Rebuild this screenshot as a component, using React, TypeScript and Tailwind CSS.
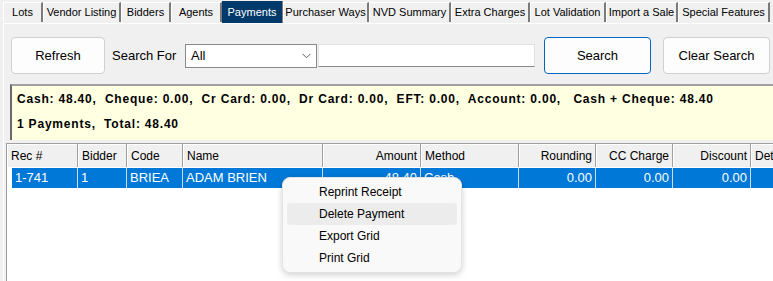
import React from "react";

const tabs: { label: string; w: number }[] = [
  { label: "Lots", w: 40 },
  { label: "Vendor Listing", w: 78 },
  { label: "Bidders", w: 50 },
  { label: "Agents", w: 51 },
  { label: "Payments", w: 61 },
  { label: "Purchaser Ways", w: 86 },
  { label: "NVD Summary", w: 82 },
  { label: "Extra Charges", w: 79 },
  { label: "Lot Validation", w: 76 },
  { label: "Import a Sale", w: 72 },
  { label: "Special Features", w: 92 },
];

const cols: { label: string; w: number; right?: boolean; value: string }[] = [
  { label: "Rec #", w: 71, value: "1-741" },
  { label: "Bidder", w: 49, value: "1" },
  { label: "Code", w: 56, value: "BRIEA" },
  { label: "Name", w: 140, value: "ADAM BRIEN" },
  { label: "Amount", w: 98, right: true, value: "48.40" },
  { label: "Method", w: 98, value: "Cash" },
  { label: "Rounding", w: 77, right: true, value: "0.00" },
  { label: "CC Charge", w: 77, right: true, value: "0.00" },
  { label: "Discount", w: 78, right: true, value: "0.00" },
  { label: "Details", w: 60, value: "" },
];

export default function App() {
  return (
    <div
      className="relative w-[773px] h-[281px] overflow-hidden bg-[#f0f0f0] text-black"
      style={{ fontFamily: '"Liberation Sans", Arial, sans-serif' }}
    >
      {/* Tab strip */}
      <div className="flex h-[23px] pl-[3px] items-end">
        {tabs.map((t) => {
          const sel = t.label === "Payments";
          return sel ? (
            <div
              key={t.label}
              style={{ width: t.w }}
              className="h-[22px] flex items-center justify-center pt-[1px] bg-[#003a6b] text-white text-[11px] border-r border-[#7f7f7f]"
            >
              {t.label}
            </div>
          ) : (
            <div
              key={t.label}
              style={{ width: t.w }}
              className="h-[20px] mb-[1px] flex items-center justify-center bg-[#f0f0f0] text-[11px] border-l border-t border-white border-r-2 border-r-[#7a7a7a] whitespace-nowrap"
            >
              {t.label}
            </div>
          );
        })}
      </div>

      {/* Panel */}
      <div className="ml-[3px] h-[258px] border-l border-t border-white flex flex-col">
        {/* Toolbar */}
        <div className="flex items-center mt-[13px] pl-[7px] h-[37px] text-[13px]">
          <button className="w-[94px] h-[37px] rounded-[4px] border border-[#d0d0d0] bg-[#fdfdfd]">
            Refresh
          </button>
          <div className="w-[74px] ml-[6px] pl-[1px]">Search For</div>
          <div className="w-[132px] h-[24px] border border-[#8a8a8a] bg-white flex items-center justify-between pl-[5px] pr-[5px]">
            <span>All</span>
            <svg width="9" height="6" viewBox="0 0 9 6">
              <path d="M0.5 0.8 L4.5 4.8 L8.5 0.8" fill="none" stroke="#606060" strokeWidth="1" />
            </svg>
          </div>
          <div className="w-[217px] h-[23px] ml-[1px] bg-white border border-[#e2e2e2] border-b-[#8a8a8a]" />
          <button className="ml-[9px] w-[107px] h-[37px] rounded-[4px] border border-[#0067c0] bg-[#fdfdfd]">
            Search
          </button>
          <button className="ml-[12px] w-[107px] h-[37px] rounded-[4px] border border-[#d0d0d0] bg-[#fdfdfd]">
            Clear Search
          </button>
        </div>

        {/* Summary */}
        <div className="ml-[6px] mt-[10px] h-[56px] bg-[#ffffe1] border-t-2 border-l-2 border-t-[#a0a0a0] border-l-[#696969] pl-[5px] pt-[1px] text-[12px] font-bold tracking-[0.8px] leading-[25px] whitespace-pre">
          <div>Cash: 48.40,  Cheque: 0.00,  Cr Card: 0.00,  Dr Card: 0.00,  EFT: 0.00,  Account: 0.00,   Cash + Cheque: 48.40</div>
          <div>1 Payments,  Total: 48.40</div>
        </div>

        {/* Grid */}
        <div className="ml-[2px] mt-[3px] flex-1 bg-white border-l border-t border-[#a0a0a0] overflow-hidden">
          <div className="flex h-[24px] bg-[#f0f0f0] border-b border-white">
            {cols.map((c) => (
              <div
                key={c.label}
                style={{ width: c.w }}
                className={`shrink-0 h-full flex items-center text-[12px] border-r border-[#a0a0a0] shadow-[inset_1px_1px_0_#ffffff] px-[3px] whitespace-nowrap overflow-hidden ${
                  c.right ? "justify-end" : "justify-start pl-[4px]"
                }`}
              >
                {c.label}
              </div>
            ))}
          </div>
          <div className="flex h-[20px] pl-[5px]">
            {cols.map((c, i) => (
              <div
                key={c.label}
                style={{ width: i === 0 ? c.w - 5 : c.w }}
                className={`shrink-0 h-full flex items-center bg-[#0078d7] text-white text-[13px] border-r border-[#c8dcf0] px-[3px] whitespace-nowrap overflow-hidden ${
                  c.right ? "justify-end" : "justify-start"
                }`}
              >
                {c.value}
              </div>
            ))}
          </div>
        </div>
      </div>

      {/* Context menu */}
      <div className="absolute left-[282px] top-[177px] w-[180px] py-[3px] rounded-[8px] border border-[#e3e3e3] bg-[#f9f9f9] shadow-[0_2px_6px_rgba(0,0,0,0.18)] text-[12px]">
        {["Reprint Receipt", "Delete Payment", "Export Grid", "Print Grid"].map((m) => (
          <div
            key={m}
            className={`mx-[4px] h-[22px] flex items-center pl-[32px] rounded-[4px] ${
              m === "Delete Payment" ? "bg-[#ececec]" : ""
            }`}
          >
            {m}
          </div>
        ))}
      </div>
    </div>
  );
}
